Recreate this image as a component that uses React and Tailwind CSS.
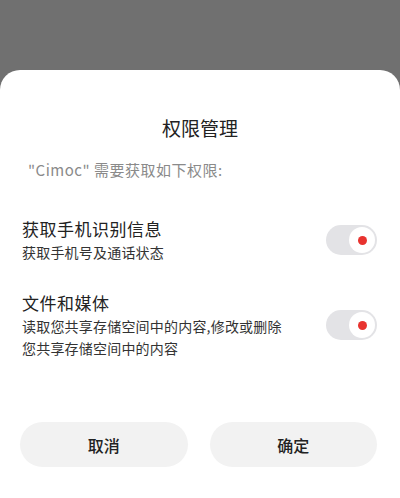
const items = [
  { title: "获取手机识别信息", desc: ["获取手机号及通话状态"] },
  { title: "文件和媒体", desc: ["读取您共享存储空间中的内容,修改或删除", "您共享存储空间中的内容"] },
];

function Toggle() {
  return (
    <div className="w-[51px] h-[30px] rounded-full bg-[#e3e3e6] flex items-center justify-end pr-[2px]">
      <div className="w-[26px] h-[26px] rounded-full bg-white flex items-center justify-center">
        <div className="w-[9px] h-[9px] rounded-full bg-[#e8332f]" />
      </div>
    </div>
  );
}

export default function App() {
  return (
    <div
      className="w-[400px] h-[498px] bg-[#707070] flex flex-col"
      style={{ fontFamily: '"Noto Sans CJK SC", "Noto Sans", sans-serif' }}
    >
      <div className="h-[70px] shrink-0" />
      <div className="flex-1 bg-white rounded-t-[20px] flex flex-col">
        <h1 className="text-center text-[19px] text-[#222] mt-[45px] leading-[26px]">权限管理</h1>
        <p className="ml-[28px] mt-[19px] text-[15px] tracking-[0.5px] text-[#8a8a8a] leading-[20px]">"Cimoc" 需要获取如下权限:</p>

        <div className="mt-[37px] flex flex-col gap-[28px]">
          {items.map((it, i) => (
            <div key={i} className="flex items-center pl-[22px] pr-[23px]">
              <div className="flex-1">
                <div className="text-[17px] tracking-[0.5px] text-[#222] leading-[24px]">{it.title}</div>
                {it.desc.map((d, j) => (
                  <div key={j} className="text-[14px] tracking-[0.2px] text-[#333] leading-[21px] mt-[1px]">{d}</div>
                ))}
              </div>
              <Toggle />
            </div>
          ))}
        </div>

        <div className="mt-auto mb-[31px] flex gap-[22px] pl-[20px] pr-[23px]">
          <button className="flex-1 h-[45px] rounded-full bg-[#f2f2f2] text-[16px] font-medium text-[#222]">取消</button>
          <button className="flex-1 h-[45px] rounded-full bg-[#f2f2f2] text-[16px] font-medium text-[#222]">确定</button>
        </div>
      </div>
    </div>
  );
}
